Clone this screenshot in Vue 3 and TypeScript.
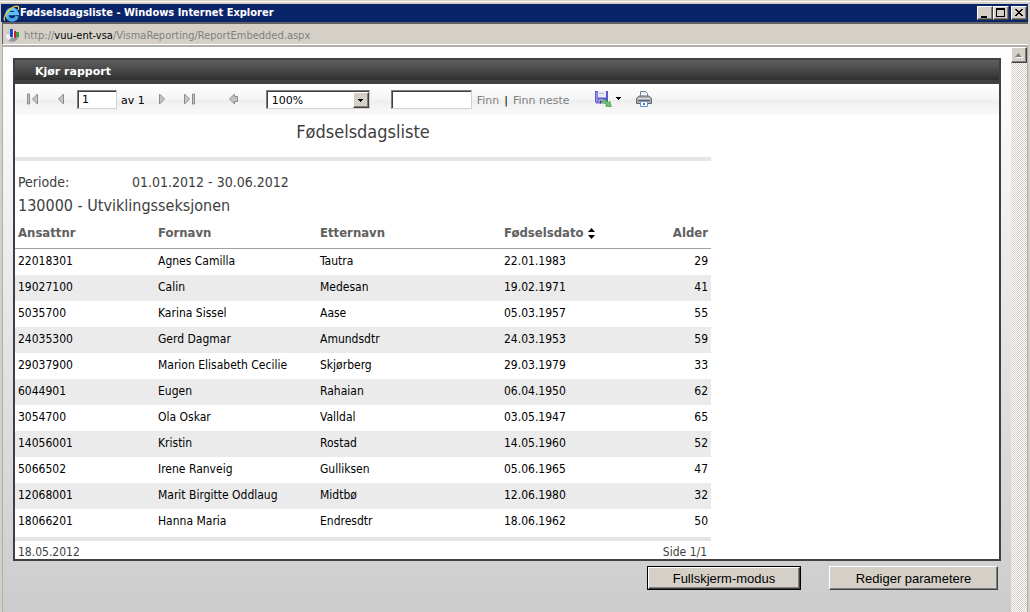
<script setup lang="ts">
import { ref } from 'vue'

interface Employee {
  id: string
  first: string
  last: string
  born: string
  age: number
}

const page = ref('1')
const zoom = ref('100%')
const query = ref('')

const employees: Employee[] = [
  { id: '22018301', first: 'Agnes Camilla', last: 'Tautra', born: '22.01.1983', age: 29 },
  { id: '19027100', first: 'Calin', last: 'Medesan', born: '19.02.1971', age: 41 },
  { id: '5035700', first: 'Karina Sissel', last: 'Aase', born: '05.03.1957', age: 55 },
  { id: '24035300', first: 'Gerd Dagmar', last: 'Amundsdtr', born: '24.03.1953', age: 59 },
  { id: '29037900', first: 'Marion Elisabeth Cecilie', last: 'Skjørberg', born: '29.03.1979', age: 33 },
  { id: '6044901', first: 'Eugen', last: 'Rahaian', born: '06.04.1950', age: 62 },
  { id: '3054700', first: 'Ola Oskar', last: 'Valldal', born: '03.05.1947', age: 65 },
  { id: '14056001', first: 'Kristin', last: 'Rostad', born: '14.05.1960', age: 52 },
  { id: '5066502', first: 'Irene Ranveig', last: 'Gulliksen', born: '05.06.1965', age: 47 },
  { id: '12068001', first: 'Marit Birgitte Oddlaug', last: 'Midtbø', born: '12.06.1980', age: 32 },
  { id: '18066201', first: 'Hanna Maria', last: 'Endresdtr', born: '18.06.1962', age: 50 },
]
</script>

<template>
  <div class="window">
    <header class="titlebar">
      <svg class="ie" viewBox="0 0 17 17" aria-hidden="true">
        <path d="M14.2 11.200A5.300 5.300 0 1 1 14.400 8.700H5" fill="none" stroke="#5cc0f6" stroke-width="3.200" />
        <path d="M14 11.800A5.600 5.600 0 0 1 4.600 12.500" fill="none" stroke="#3a9fe6" stroke-width="1.500" />
        <path d="M1.800 15.600C-.6 12.800 4.500 5.400 9.800 2.400c3-1.700 5.800-1.800 5.900.4.1.8-.2 1.500-.6 2.200" fill="none" stroke="#f5c52c" stroke-width="1.300" />
      </svg>
      <h1>Fødselsdagsliste - Windows Internet Explorer</h1>
      <div class="window-buttons">
        <button type="button" class="raised" aria-label="Minimer">
          <svg viewBox="0 0 12 10"><path d="M2 8h6v2H2z" /></svg>
        </button>
        <button type="button" class="raised" aria-label="Maksimer">
          <svg viewBox="0 0 12 10"><path d="M1 0h9v9H1zM2 2v6h7V2z" fill-rule="evenodd" /></svg>
        </button>
        <button type="button" class="raised close" aria-label="Lukk">
          <svg viewBox="0 0 12 10"><path d="M2 1h2v1h1v1h2V2h1V1h2v1H9v1H8v1H7v1h1v1h1v1h1v1H8V7H7V6H5v1H4v1H2V7h1V6h1V5h1V4H4V3H3V2H2z" /></svg>
        </button>
      </div>
    </header>

    <div class="address">
      <svg class="favicon" viewBox="0 0 16 16" aria-hidden="true">
        <circle cx="7.500" cy="8.500" r="6.500" fill="#c6cad1" />
        <path d="M1.500 6.500a6.500 6.500 0 0 0 3 7.500L7 9z" fill="#f0f2f4" />
        <path d="M3.500 13.600a6.500 6.500 0 0 0 10-3.400L7 10z" fill="#9399a4" />
        <path d="M5 2h3v8H5z" fill="#2748c4" />
        <path d="M8 3h1v8H8z" fill="#fff" />
        <path d="M9 4h2v7H9z" fill="#d0222c" />
        <path d="M11 5h3v5h-3z" fill="#35a040" />
      </svg>
      <span>http://<b>vuu-ent-vsa</b>/VismaReporting/ReportEmbedded.aspx</span>
    </div>

    <div class="viewport">
      <main class="content">
        <section class="panel">
          <h2 class="panel-title">Kjør rapport</h2>

          <div class="toolbar">
            <button type="button" class="icon first" aria-label="Første side">
              <svg viewBox="0 0 12 12"><path d="M.5 1h2v10h-2zM10.500 1v10L5.500 6z" /></svg>
            </button>
            <button type="button" class="icon prev" aria-label="Forrige side">
              <svg viewBox="0 0 12 12"><path d="M8.500 1v10L3.500 6z" /></svg>
            </button>
            <input v-model="page" class="sunken page" aria-label="Side" />
            <span class="pages">av 1</span>
            <button type="button" class="icon next" aria-label="Neste side">
              <svg viewBox="0 0 12 12"><path d="M3.500 1v10L8.500 6z" /></svg>
            </button>
            <button type="button" class="icon last" aria-label="Siste side">
              <svg viewBox="0 0 12 12"><path d="M9.500 1h2v10h-2zM1.500 1v10L6.500 6z" /></svg>
            </button>
            <button type="button" class="icon back" aria-label="Tilbake">
              <svg viewBox="0 0 12 12"><path d="M1.500 6 6.500 1v2.500h3v5h-3V11z" /></svg>
            </button>
            <div class="zoom sunken">
              <select v-model="zoom" aria-label="Zoom">
                <option>100%</option>
              </select>
              <span class="drop raised" aria-hidden="true">
                <svg viewBox="0 0 5 3"><path d="M0 0h5v1H4v1H3v1H2V2H1V1H0z" /></svg>
              </span>
            </div>
            <input v-model="query" class="sunken query" aria-label="Søk i rapport" />
            <button type="button" class="link">Finn</button>
            <span class="bar">|</span>
            <button type="button" class="link">Finn neste</button>
            <button type="button" class="icon export" aria-label="Eksporter">
              <svg class="disk" viewBox="0 0 17 16">
                <path d="M0 0h13v12.500H1.500L0 11z" fill="#5a5ac8" />
                <path d="M1 1h1.500v10H1z" fill="#9a9af0" />
                <path d="M3 0h8v6.500H3z" fill="#e6eafa" />
                <path d="M4 2h5v1H4z" fill="#b4bce0" />
                <path d="M3.500 8.500h6v4h-6z" fill="#d4d4e6" />
                <path d="M4.500 9.500h2v3h-2z" fill="#39398c" />
                <path d="M6.500 10.500 9.500 8l1.500 1.800 2.500 1.700 1.200-1.300 1.500 5.300-5.500-.3 1.200-1.300-2.400-1.900z" fill="#6cca70" stroke="#35823d" stroke-width=".7" />
              </svg>
              <svg class="caret" viewBox="0 0 5 3"><path d="M0 0h5v1H4v1H3v1H2V2H1V1H0z" /></svg>
            </button>
            <button type="button" class="icon print" aria-label="Skriv ut">
              <svg viewBox="0 0 16 16">
                <path d="M4.500 6V.5h5l2 2V6z" fill="#eef4fc" stroke="#7686a0" />
                <path d="M.5 7.500 3 5h10l2.500 2.500v5H.5z" fill="#a8abaf" stroke="#66696e" />
                <path d="M2 7.500h12" stroke="#dcdee0" />
                <path d="M2 9.500h12" stroke="#606368" />
                <path d="M4.500 10.500h7v5h-7z" fill="#f4f9ff" stroke="#7193c2" />
                <path d="M7 12h2v2H7z" fill="#3b86d8" />
              </svg>
            </button>
          </div>

          <article class="report">
            <h3>Fødselsdagsliste</h3>
            <dl class="period">
              <dt>Periode:</dt>
              <dd>01.01.2012 - 30.06.2012</dd>
            </dl>
            <h4>130000 - Utviklingsseksjonen</h4>
            <table>
              <thead>
                <tr>
                  <th class="c-id">Ansattnr</th>
                  <th class="c-first">Fornavn</th>
                  <th class="c-last">Etternavn</th>
                  <th class="c-born">
                    Fødselsdato
                    <button type="button" class="sort" aria-label="Sorter">
                      <svg viewBox="0 0 7 11"><path d="M0 4h7L3.500 0zM0 7h7L3.500 11z" /></svg>
                    </button>
                  </th>
                  <th class="c-age">Alder</th>
                </tr>
              </thead>
              <tbody>
                <tr v-for="e in employees" :key="e.id">
                  <td>{{ e.id }}</td>
                  <td>{{ e.first }}</td>
                  <td>{{ e.last }}</td>
                  <td>{{ e.born }}</td>
                  <td class="c-age">{{ e.age }}</td>
                </tr>
              </tbody>
            </table>
            <footer class="report-foot">
              <span>18.05.2012</span>
              <span>Side 1/1</span>
            </footer>
          </article>
        </section>

        <div class="actions">
          <button type="button" class="default"><span class="raised">Fullskjerm-modus</span></button>
          <button type="button" class="raised edit">Rediger parametere</button>
        </div>
      </main>

      <div class="scrollbar">
        <button type="button" class="raised" aria-label="Rull opp">
          <svg viewBox="0 0 8 5"><path d="M1 5h8L5 1z" fill="#fff" /><path d="M0 4h7L3.500 0z" fill="#808080" /></svg>
        </button>
      </div>
    </div>
  </div>
</template>

<style>
body {
  margin: 0;
}
</style>

<style scoped>
* {
  box-sizing: border-box;
}

.window {
  display: flex;
  flex-direction: column;
  min-height: 100vh;
  padding: 4px 2px 0 1px;
  background: #d4d0c8;
  box-shadow: inset 0 1px #d4d0c8, inset 0 2px #fff;
  font-family: "DejaVu Sans Condensed", "DejaVu Sans", Tahoma, sans-serif;
  color: #000;
}

h1,
h2,
h3,
h4,
dl,
dd {
  margin: 0;
}

button,
input,
select {
  margin: 0;
  padding: 0;
  border: 0;
  border-radius: 0;
  background: none;
  font: inherit;
  color: inherit;
}

svg {
  display: block;
}

.raised {
  background: #d4d0c8;
  border: 1px solid;
  border-color: #fff #404040 #404040 #fff;
  box-shadow: inset -1px -1px #808080;
}

.sunken {
  background: #fff;
  border: 1px solid;
  border-color: #808080 #d4d0c8 #d4d0c8 #808080;
  box-shadow: inset 1px 1px #404040;
}

.titlebar {
  display: flex;
  align-items: center;
  height: 18px;
  padding: 0 1px 0 2px;
  background: #0a246a;
  color: #fff;
}

.ie {
  width: 17px;
  height: 17px;
}

h1 {
  flex: 1;
  font-size: 11px;
  line-height: 18px;
  font-weight: bold;
}

.window-buttons {
  display: flex;
}

.window-buttons button {
  width: 16px;
  height: 14px;
  padding: 1px;
}

.window-buttons svg {
  width: 12px;
  height: 10px;
}

.window-buttons .close {
  margin-left: 2px;
}

.address {
  display: flex;
  align-items: center;
  gap: 3px;
  height: 23px;
  margin: 0 0 0 1px;
  padding: 1px 0 0 2px;
  border-top: 2px solid #606060;
  border-bottom: 1px solid #fff;
  border-left: 1px solid #606060;
  font-size: 11px;
  color: #808080;
}

.address span {
  padding-top: 1px;
}

.address b {
  font-weight: normal;
  color: #000;
}

.favicon {
  width: 16px;
  height: 16px;
}

.viewport {
  display: flex;
  flex: 1;
  margin-left: 1px;
  border: 1px solid #b0adaa;
  border-width: 2px 1px 0;
}

.content {
  flex: 1;
  padding: 11px 10px 22px;
  background: linear-gradient(#fff, #ccc);
}

.panel {
  border: 2px solid #404040;
  background: #fff;
}

.panel-title {
  height: 24px;
  padding-left: 20px;
  border-bottom: 4px solid #404040;
  background: linear-gradient(#606060, #303030);
  font-family: "DejaVu Sans", Verdana, sans-serif;
  font-size: 11px;
  line-height: 24px;
  font-weight: bold;
  color: #fff;
}

.toolbar {
  display: flex;
  align-items: center;
  height: 31px;
  background: linear-gradient(#fff, #f4f4f4 50%, #eee 52%, #fafafa);
  font-family: "DejaVu Sans", Verdana, sans-serif;
  font-size: 11px;
}

.icon {
  padding-bottom: 2px;
}

.icon svg {
  width: 12px;
  height: 12px;
  fill: #c4c4c4;
  stroke: #8c8c8c;
}

.first {
  margin-left: 12px;
}

.prev {
  margin-left: 16px;
}

.page {
  width: 40px;
  height: 19px;
  margin-left: 10px;
  padding-left: 4px;
}

.pages {
  margin-left: 4px;
}

.next {
  margin-left: 11px;
}

.last {
  margin-left: 15px;
}

.back {
  margin-left: 33px;
}

.zoom {
  display: flex;
  width: 104px;
  height: 19px;
  margin-left: 26px;
  padding: 1px 0 0 1px;
}

.zoom select {
  flex: 1;
  min-width: 0;
  padding-left: 4px;
  appearance: none;
}

.drop {
  display: grid;
  place-items: center;
  width: 16px;
}

.drop svg {
  width: 5px;
  height: 3px;
}

.query {
  width: 81px;
  height: 19px;
  margin-left: 21px;
}

.pages,
.link,
.bar {
  padding-top: 1px;
}

.link {
  margin-left: 5px;
  color: #808080;
}

.bar {
  margin-left: 5px;
}

.export {
  display: flex;
  align-items: center;
  gap: 4px;
  margin-left: 25px;
}

.export .disk {
  width: 17px;
  height: 16px;
  stroke: none;
}

.export .caret {
  width: 5px;
  height: 3px;
  fill: #000;
  stroke: none;
}

.print {
  margin-left: 15px;
}

.print svg {
  width: 16px;
  height: 16px;
  stroke: none;
}

.report {
  width: 696px;
  max-width: 100%;
  font-size: 12px;
}

h3 {
  height: 46px;
  border-bottom: 4px solid #e5e5e5;
  font-size: 18px;
  line-height: 34px;
  font-weight: normal;
  text-align: center;
  color: #404040;
}

.period {
  display: flex;
  padding: 11px 3px 0;
  font-size: 14px;
  line-height: 20px;
  color: #404040;
}

.period dt {
  width: 114px;
}

h4 {
  padding-left: 3px;
  font-size: 16px;
  line-height: 28px;
  font-weight: normal;
  color: #404040;
}

table {
  width: 100%;
  table-layout: fixed;
  border-collapse: separate;
  border-spacing: 0;
}

th {
  height: 29px;
  padding: 0 3px 4px;
  border-bottom: 1px solid #a0a0a0;
  font-size: 13px;
  text-align: left;
  color: #606060;
}

td {
  height: 26px;
  padding: 0 3px 2px;
}

tbody tr:nth-child(even) {
  background: #ebebeb;
}

.c-id {
  width: 140px;
}

.c-first {
  width: 162px;
}

.c-last {
  width: 184px;
}

.c-born {
  width: 130px;
}

.c-age {
  text-align: right;
}

.sort {
  display: inline-block;
  vertical-align: middle;
}

.sort svg {
  width: 7px;
  height: 11px;
}

.report-foot {
  display: flex;
  justify-content: space-between;
  margin-top: 2px;
  padding: 4px 4px 0 3px;
  border-top: 4px solid #e5e5e5;
  line-height: 14px;
  color: #404040;
}

.actions {
  display: flex;
  justify-content: flex-end;
  gap: 28px;
  padding: 5px 3px 0;
  font-family: "Liberation Sans", Arial, sans-serif;
  font-size: 13px;
}

.actions button {
  height: 24px;
}

.default {
  width: 154px;
  border: 1px solid #000;
}

.default span {
  display: grid;
  place-items: center;
  height: 100%;
}

.edit {
  width: 169px;
}

.scrollbar {
  width: 16px;
  background: repeating-conic-gradient(#fff 0 25%, #d4d0c8 0 50%) 0 0 / 2px 2px;
}

.scrollbar button {
  display: grid;
  place-items: center;
  width: 16px;
  height: 16px;
}

.scrollbar svg {
  width: 8px;
  height: 5px;
}
</style>
